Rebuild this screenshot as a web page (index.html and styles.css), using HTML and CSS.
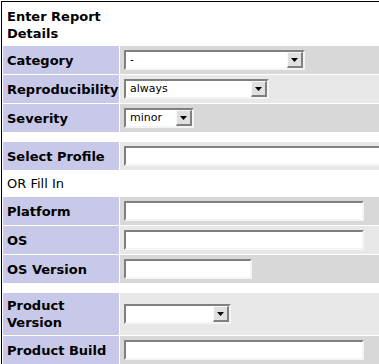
FILE: index.html
```html
<!DOCTYPE html>
<html lang="en">

<head>
    <meta charset="UTF-8">
    <meta name="viewport" content="width=device-width, initial-scale=1.0">
    <title>Report Bug</title>
    <link rel="stylesheet" href="styles.css">
</head>

<body>
    <table class="report">
        <tr>
            <td class="form-title">Enter Report Details</td>
            <td></td>
        </tr>
        <tr class="row-1">
            <td class="category">Category</td>
            <td>
                <div class="select select-category">
                    <span class="select-text">-</span>
                    <span class="select-button"><svg width="7" height="4" viewBox="0 0 7 4"><polygon points="0,0 7,0 3.5,4" fill="#000"/></svg></span>
                </div>
            </td>
        </tr>
        <tr class="row-2">
            <td class="category">Reproducibility</td>
            <td>
                <div class="select select-repro">
                    <span class="select-text">always</span>
                    <span class="select-button"><svg width="7" height="4" viewBox="0 0 7 4"><polygon points="0,0 7,0 3.5,4" fill="#000"/></svg></span>
                </div>
            </td>
        </tr>
        <tr class="row-1">
            <td class="category">Severity</td>
            <td>
                <div class="select select-severity">
                    <span class="select-text">minor</span>
                    <span class="select-button"><svg width="7" height="4" viewBox="0 0 7 4"><polygon points="0,0 7,0 3.5,4" fill="#000"/></svg></span>
                </div>
            </td>
        </tr>
        <tr class="spacer">
            <td colspan="2"></td>
        </tr>
        <tr class="row-2">
            <td class="category">Select Profile</td>
            <td><div class="input input-profile"></div></td>
        </tr>
        <tr>
            <td class="plain" colspan="2">OR Fill In</td>
        </tr>
        <tr class="row-1">
            <td class="category">Platform</td>
            <td><div class="input input-wide"></div></td>
        </tr>
        <tr class="row-2">
            <td class="category">OS</td>
            <td><div class="input input-wide"></div></td>
        </tr>
        <tr class="row-1">
            <td class="category">OS Version</td>
            <td><div class="input input-short"></div></td>
        </tr>
        <tr class="spacer">
            <td colspan="2"></td>
        </tr>
        <tr class="row-2">
            <td class="category">Product Version</td>
            <td>
                <div class="select select-version">
                    <span class="select-text"></span>
                    <span class="select-button"><svg width="7" height="4" viewBox="0 0 7 4"><polygon points="0,0 7,0 3.5,4" fill="#000"/></svg></span>
                </div>
            </td>
        </tr>
        <tr class="row-1">
            <td class="category">Product Build</td>
            <td><div class="input input-wide"></div></td>
        </tr>
    </table>
</body>

</html>
```

FILE: styles.css
```css
html,
body {
    overflow: hidden;
}

body {
    margin: 0;
    padding: 1px 0 0 1px;
    background-color: #ffffff;
    font-family: "DejaVu Sans", Verdana, sans-serif;
    font-size: 13px;
    color: #000000;
}

.report {
    width: 480px;
    border: 1px solid #000000;
    border-collapse: separate;
    border-spacing: 1px;
}

.report td {
    padding: 4px;
    line-height: 17px;
}

/* label column: 4px left pad + 112px = 116px */
.report td.form-title {
    width: 112px;
    padding: 5px 0 3px 4px;
    font-weight: bold;
}

.report td.category {
    width: 112px;
    padding-right: 0;
    background-color: #c8c8e8;
    font-weight: bold;
}

.row-1 td {
    background-color: #d8d8d8;
}

.row-2 td {
    background-color: #e8e8e8;
}

.report .spacer td {
    height: 8px;
    padding: 0;
}

.select,
.input {
    display: flex;
    box-sizing: border-box;
    height: 20px;
    border: 2px solid;
    border-color: #808080 #f4f4f4 #f4f4f4 #808080;
    background-color: #ffffff;
}

.select-text {
    flex: 1;
    padding-left: 4px;
    font-size: 11px;
    line-height: 16px;
}

.select-button {
    display: flex;
    justify-content: center;
    align-items: center;
    box-sizing: border-box;
    width: 16px;
    height: 16px;
    background-color: #e0e0e0;
    border-top: 1px solid #f8f8f8;
    border-left: 1px solid #f8f8f8;
    border-right: 2px solid #808080;
    border-bottom: 2px solid #808080;
}

.select-category {
    width: 181px;
}

.select-repro {
    width: 145px;
}

.select-severity {
    width: 70px;
}

.select-version {
    width: 107px;
}

.input-profile {
    width: 290px;
}

.input-wide {
    width: 240px;
}

.input-short {
    width: 128px;
}
```
